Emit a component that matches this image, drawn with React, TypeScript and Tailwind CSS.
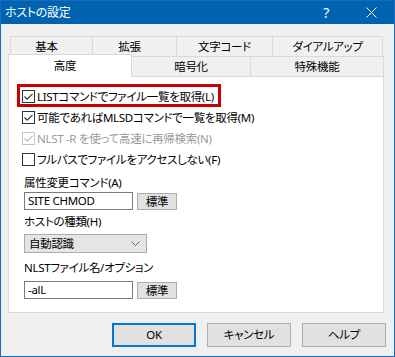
import React from 'react';

const ui = "font-['Noto_Sans','Noto_Sans_CJK_JP',sans-serif] [font-feature-settings:'palt'] text-[11.5px] tracking-[-0.3px] text-black";

const Check: React.FC<{ checked?: boolean; disabled?: boolean }> = ({ checked, disabled }) => (
  <span
    className={
      'w-[13px] h-[13px] shrink-0 border bg-white flex items-center justify-center ' +
      (disabled ? 'border-[#c4c4c4]' : 'border-[#333333]')
    }
  >
    {checked && (
      <svg width="11" height="11" viewBox="0 0 11 11">
        <path
          d="M1.5 5.5 L4.2 8.2 L9.5 2.8"
          fill="none"
          stroke={disabled ? '#bcbcbc' : '#333333'}
          strokeWidth="1.2"
        />
      </svg>
    )}
  </span>
);

const CheckRow: React.FC<{ label: string; checked?: boolean; disabled?: boolean }> = ({
  label,
  checked,
  disabled,
}) => (
  <div className="h-[21px] flex items-center gap-[2px]">
    <Check checked={checked} disabled={disabled} />
    <span className={'whitespace-nowrap ' + (disabled ? 'text-[#9a9a9a]' : '')}>{label}</span>
  </div>
);

const SmallButton = () => (
  <button className="ml-[4px] mt-[1px] w-[40px] h-[17px] bg-[#e1e1e1] border border-[#adadad] flex items-center justify-center leading-none">
    標準
  </button>
);

const TextBox: React.FC<{ value: string }> = ({ value }) => (
  <div className="w-[109px] h-[18px] border border-[#7a7a7a] bg-white px-[3px] flex items-center leading-none whitespace-nowrap">
    {value}
  </div>
);

export default function App() {
  return (
    <div className={'w-[395px] h-[357px] bg-[#f0f0f0] border border-[#1a6dbd] flex flex-col ' + ui}>
      {/* title bar */}
      <div className="h-[23px] shrink-0 bg-[#0063b1] flex items-center text-white pl-[4px]">
        <span className="text-[12px]">ホストの設定</span>
        <span className="ml-auto mr-[37px] text-[14px] leading-none">?</span>
        <svg width="11" height="11" viewBox="0 0 11 11" className="mr-[17px]">
          <path d="M0.5 0.5 L10.5 10.5 M10.5 0.5 L0.5 10.5" stroke="#ffffff" strokeWidth="1" />
        </svg>
      </div>

      <div className="pl-[7px] pr-[8px] pt-[12px] flex flex-col">
        {/* tabs row 1 */}
        <div className="flex ml-[2px] h-[20px]">
          <div className="w-[83px] border-t border-l border-r border-[#d9d9d9] flex items-center justify-center pr-[10px]">基本</div>
          <div className="w-[84px] border-t border-r border-[#d9d9d9] flex items-center justify-center pr-[10px]">拡張</div>
          <div className="w-[96px] border-t border-r border-[#d9d9d9] flex items-center justify-center">文字コード</div>
          <div className="w-[110px] border-t border-r border-[#d9d9d9] flex items-center justify-center">ダイアルアップ</div>
        </div>
        {/* tabs row 2 */}
        <div className="flex items-end h-[22px] -mt-[2px]">
          <div className="relative z-10 w-[124px] h-[23px] -mb-[1px] bg-white border-t border-l border-r border-[#d9d9d9] flex items-center justify-center pr-[10px]">
            高度
          </div>
          <div className="w-[119px] h-[20px] bg-[#f0f0f0] border-t border-r border-[#d9d9d9] flex items-center justify-center">暗号化</div>
          <div className="w-[133px] h-[20px] bg-[#f0f0f0] border-t border-r border-[#d9d9d9] flex items-center justify-center">特殊機能</div>
        </div>

        {/* panel */}
        <div className="w-[376px] h-[237px] bg-white border border-[#d9d9d9] pl-[13px] pt-[9px] flex flex-col">
          <div className="relative">
            <CheckRow label="LISTコマンドでファイル一覧を取得(L)" checked />
            <div className="absolute -left-[5px] -top-[2px] w-[204px] h-[23px] border-[3px] border-[#c80000]" />
          </div>
          <CheckRow label="可能であればMLSDコマンドで一覧を取得(M)" checked />
          <CheckRow label="NLST -R を使って高速に再帰検索(N)" checked disabled />
          <CheckRow label="フルパスでファイルをアクセスしない(F)" />

          <div className="ml-[2px] mt-[4px] flex flex-col">
            <div className="h-[18px] leading-[18px]">属性変更コマンド(A)</div>
            <div className="flex items-start">
              <TextBox value="SITE CHMOD" />
              <SmallButton />
            </div>

            <div className="mt-[3px] h-[18px] leading-[18px]">ホストの種類(H)</div>
            <div className="mt-[3px] w-[123px] h-[19px] bg-[#e5e5e5] border border-[#acacac] flex items-center pl-[4px] pr-[6px]">
              <span className="leading-none">自動認識</span>
              <svg width="9" height="5" viewBox="0 0 9 5" className="ml-auto">
                <path d="M0.5 0.5 L4.5 4.5 L8.5 0.5" fill="none" stroke="#606060" strokeWidth="1" />
              </svg>
            </div>

            <div className="mt-[6px] h-[18px] leading-[18px]">NLSTファイル名/オプション</div>
            <div className="mt-[4px] flex items-start">
              <TextBox value="-alL" />
              <SmallButton />
            </div>
          </div>
        </div>

        {/* dialog buttons */}
        <div className="mt-[10px] flex justify-end gap-[11px]">
          <button className="w-[84px] h-[24px] bg-[#e1e1e1] border-2 border-[#0078d7] flex items-center justify-center">OK</button>
          <button className="w-[84px] h-[24px] bg-[#e1e1e1] border border-[#adadad] flex items-center justify-center">キャンセル</button>
          <button className="w-[84px] h-[24px] bg-[#e1e1e1] border border-[#adadad] flex items-center justify-center">ヘルプ</button>
        </div>
      </div>
    </div>
  );
}
